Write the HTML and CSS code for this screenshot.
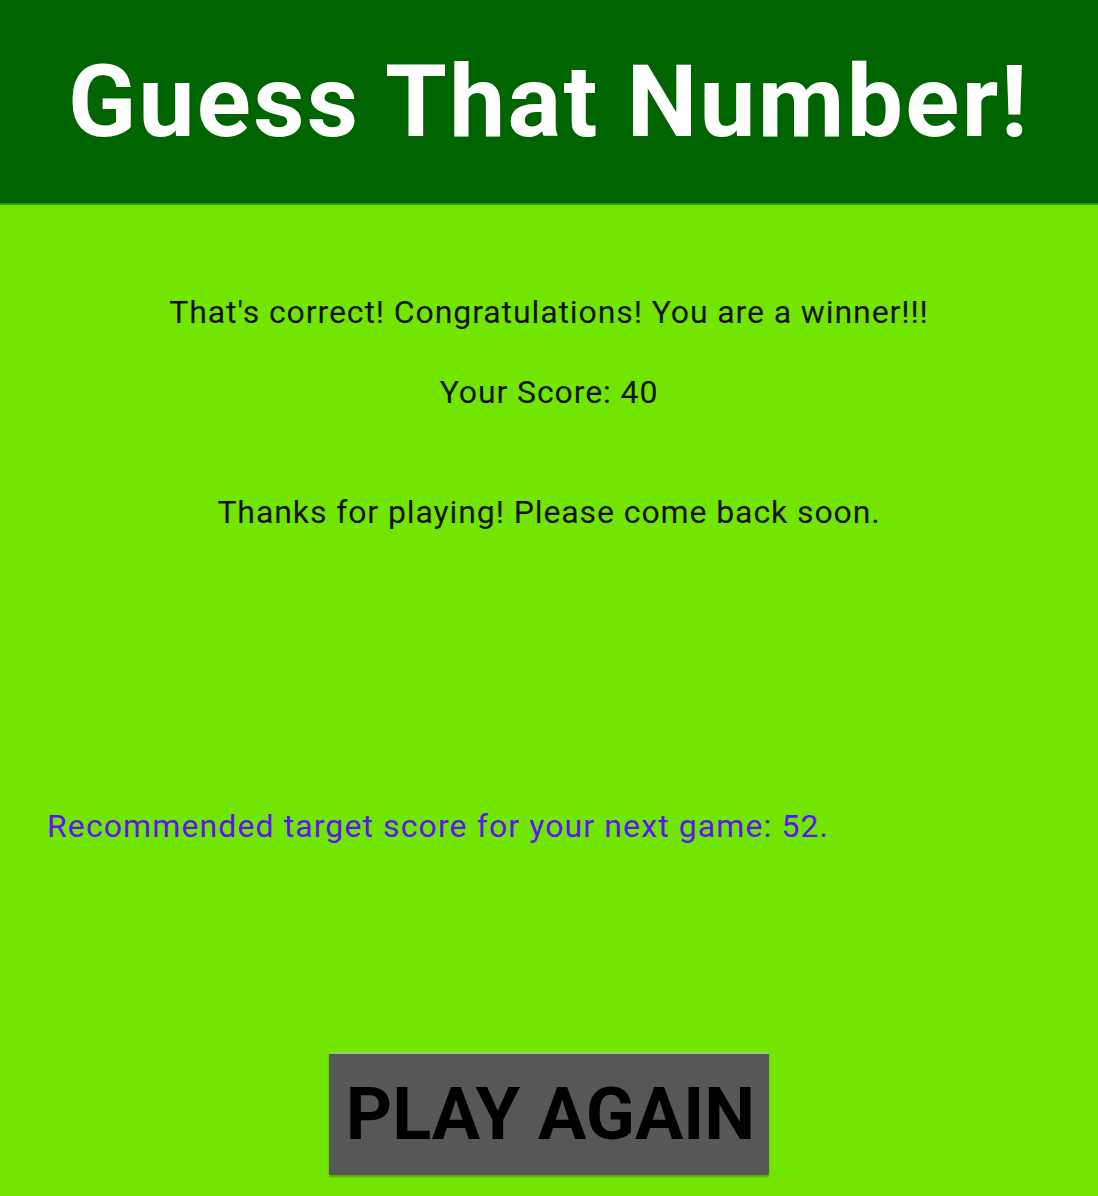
FILE: index.html
```html
<!DOCTYPE html>
<html>
<head>
<meta charset="utf-8">
<link rel="stylesheet" href="styles.css">
</head>
<body>
<div class="app">
  <header class="header"><h1 class="title">Guess That Number!</h1></header>
  <main class="content">
    <p class="msg msg-correct">That's correct! Congratulations! You are a winner!!!</p>
    <p class="msg msg-score">Your Score: 40</p>
    <p class="msg msg-thanks">Thanks for playing! Please come back soon.</p>
    <p class="recommend">Recommended target score for your next game: 52.</p>
    <div class="btn-row"><button class="btn">PLAY AGAIN</button></div>
  </main>
</div>
</body>
</html>
```
FILE: styles.css
```css
html, body {
  margin: 0;
  padding: 0;
  background: #72e500;
}
.app {
  width: 1098px;
  height: 1196px;
  font-family: Roboto, "Liberation Sans", sans-serif;
  display: flex;
  flex-direction: column;
  overflow: hidden;
}
.header {
  background: #006400;
  height: 203px;
  border-bottom: 2px solid #2d9e00;
  display: flex;
  align-items: center;
  justify-content: center;
}
.title {
  margin: 0;
  color: #ffffff;
  font-size: 100px;
  font-weight: 700;
  line-height: 1;
  letter-spacing: 2.3px;
}
.content {
  display: flex;
  flex-direction: column;
  flex: 1;
}
.msg {
  margin: 0;
  text-align: center;
  font-size: 32px;
  color: #111;
  line-height: 1;
  letter-spacing: 0.9px;
}
.msg-correct { margin-top: 91px; }
.msg-score { margin-top: 48px; }
.msg-thanks { margin-top: 88px; }
.recommend {
  margin: 282px 0 0 47px;
  font-size: 32px;
  line-height: 1;
  letter-spacing: 1.1px;
  color: #5b16f0;
}
.btn-row {
  display: flex;
  justify-content: center;
  margin-top: 210px;
}
.btn {
  box-sizing: border-box;
  width: 440px;
  height: 123px;
  background: #575757;
  border: none;
  border-top: 2px solid #8fcf70;
  border-radius: 2px;
  box-shadow: 0 2px 2px rgba(0,0,0,0.25);
  font-family: Roboto, "Liberation Sans", sans-serif;
  font-weight: 700;
  font-size: 72px;
  color: #000;
  padding: 0 0 0 3px;
}
```
